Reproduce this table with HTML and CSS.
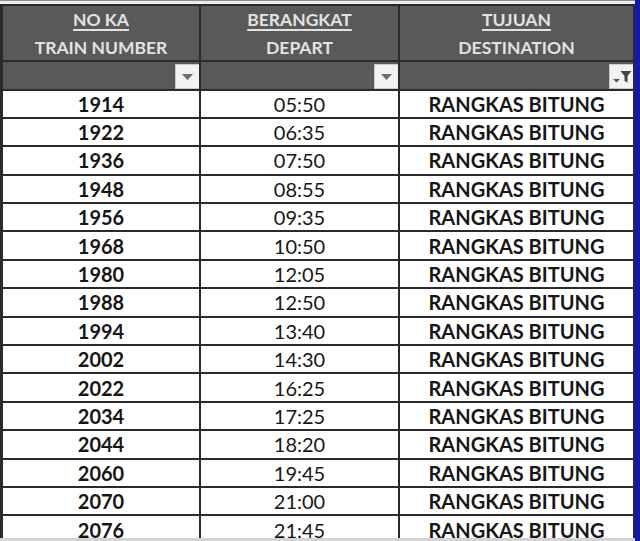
FILE: index.html
```html
<!DOCTYPE html>
<html>
<head>
<meta charset="utf-8">
<link rel="stylesheet" href="styles.css">
</head>
<body>
<div class="sheet">
  <div class="topstrip"></div>
  <div class="grid">
    <div class="hd"><span class="ul">NO KA</span><span>TRAIN NUMBER</span></div>
    <div class="hd"><span class="ul">BERANGKAT</span><span>DEPART</span></div>
    <div class="hd"><span class="ul">TUJUAN</span><span>DESTINATION</span></div>

    <div class="flt"><span class="btn"><svg width="11" height="6" viewBox="0 0 11 6"><path d="M0 0H11L5.5 6Z" fill="#6b6b6b"/></svg></span></div>
    <div class="flt"><span class="btn"><svg width="11" height="6" viewBox="0 0 11 6"><path d="M0 0H11L5.5 6Z" fill="#6b6b6b"/></svg></span></div>
    <div class="flt"><span class="btn btn-f"><svg width="20" height="14" viewBox="0 0 20 14"><path d="M1 9H8L4.5 12.5Z" fill="#555"/><path d="M8.5 1H19.5L15.5 6V12.5L12.5 11V6Z" fill="#444"/></svg></span></div>

    <div class="c num">1914</div><div class="c tm">05:50</div><div class="c dst">RANGKAS BITUNG</div>
    <div class="c num">1922</div><div class="c tm">06:35</div><div class="c dst">RANGKAS BITUNG</div>
    <div class="c num">1936</div><div class="c tm">07:50</div><div class="c dst">RANGKAS BITUNG</div>
    <div class="c num">1948</div><div class="c tm">08:55</div><div class="c dst">RANGKAS BITUNG</div>
    <div class="c num">1956</div><div class="c tm">09:35</div><div class="c dst">RANGKAS BITUNG</div>
    <div class="c num">1968</div><div class="c tm">10:50</div><div class="c dst">RANGKAS BITUNG</div>
    <div class="c num">1980</div><div class="c tm">12:05</div><div class="c dst">RANGKAS BITUNG</div>
    <div class="c num">1988</div><div class="c tm">12:50</div><div class="c dst">RANGKAS BITUNG</div>
    <div class="c num">1994</div><div class="c tm">13:40</div><div class="c dst">RANGKAS BITUNG</div>
    <div class="c num">2002</div><div class="c tm">14:30</div><div class="c dst">RANGKAS BITUNG</div>
    <div class="c num">2022</div><div class="c tm">16:25</div><div class="c dst">RANGKAS BITUNG</div>
    <div class="c num">2034</div><div class="c tm">17:25</div><div class="c dst">RANGKAS BITUNG</div>
    <div class="c num">2044</div><div class="c tm">18:20</div><div class="c dst">RANGKAS BITUNG</div>
    <div class="c num">2060</div><div class="c tm">19:45</div><div class="c dst">RANGKAS BITUNG</div>
    <div class="c num">2070</div><div class="c tm">21:00</div><div class="c dst">RANGKAS BITUNG</div>
    <div class="c num">2076</div><div class="c tm">21:45</div><div class="c dst">RANGKAS BITUNG</div>
  </div>
</div>
</body>
</html>
```
FILE: styles.css
```css
html, body {
  margin: 0;
  padding: 0;
}
body {
  background: #1818a6;
  width: 640px;
  height: 541px;
  overflow: hidden;
  font-family: Lato, "Open Sans", sans-serif;
}
.sheet {
  width: 635px;
  height: 538px;
  overflow: hidden;
  background: #ffffff;
  border-bottom: 3px solid #d4d4d4;
}
.topstrip {
  height: 3px;
  border-top: 1px solid #8e8e8e;
  background: #ececec;
}
.grid {
  display: grid;
  grid-template-columns: 196px 197px 233px;
  grid-template-rows: 54px 26.5px repeat(16, 26.4px);
  gap: 2px;
  padding: 2px 2px 2px 3px;
  background: #2a2a2a;
}
.hd {
  background: #595959;
  color: #e2e2e2;
  font-weight: 700;
  font-size: 17.5px;
  display: flex;
  flex-direction: column;
  align-items: center;
  line-height: 28px;
}
.hd .ul {
  text-decoration: underline;
  text-decoration-thickness: 1.5px;
  text-underline-offset: 3px;
}
.flt {
  background: #595959;
  display: flex;
  justify-content: flex-end;
  align-items: flex-start;
  padding-top: 2px;
}
.btn {
  width: 23px;
  height: 23px;
  background: #f2f2f2;
  border: 1px solid #c9c9c9;
  border-right: none;
  display: flex;
  align-items: center;
  justify-content: center;
}
.c {
  background: #ffffff;
  color: #161616;
  font-size: 20px;
  display: flex;
  align-items: center;
  justify-content: center;
  line-height: 1;
}
.num, .dst {
  font-weight: 700;
}
.tm {
  font-weight: 400;
}
```
